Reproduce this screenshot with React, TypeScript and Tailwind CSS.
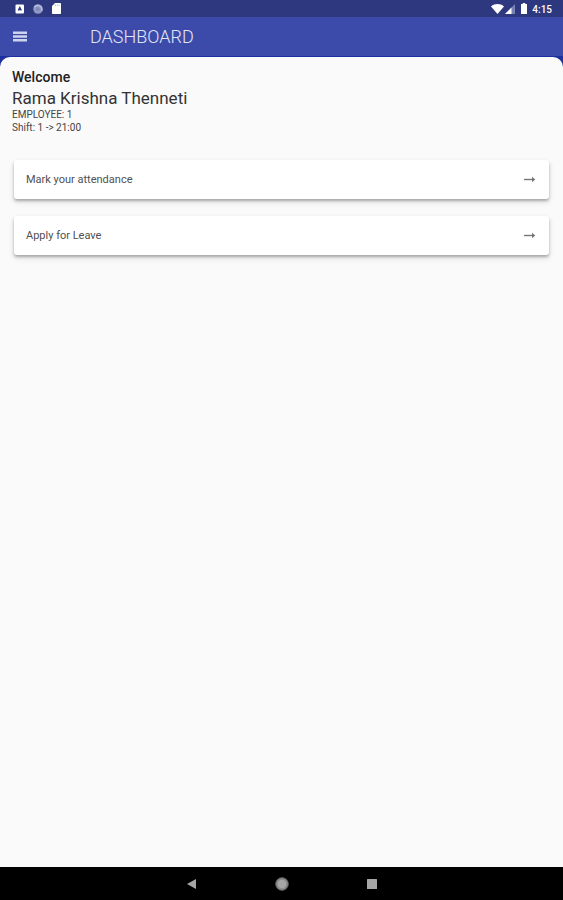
import type { ReactNode } from "react";

const employee = {
    name: "Rama Krishna Thenneti",
    id: 1,
    shift: "1 -> 21:00",
};

const actions = ["Mark your attendance", "Apply for Leave"];

function StatusBar() {
    return (
        <div className="flex h-[17px] items-center justify-between bg-[#2d387f] pr-[11px] pl-[15px] text-white">
            <div className="flex items-center gap-[9px]">
                <svg width="9" height="10" viewBox="0 0 9 10" aria-hidden="true">
                    <rect x="0.5" y="0.5" width="8.5" height="9" rx="1" fill="#fff" />
                    <path d="M3.2 6.6 4.8 3.4 6.4 6.6M3.8 5.6h2" fill="none" stroke="#2d387f" strokeWidth="1.2" />
                </svg>
                <svg width="10" height="10" viewBox="0 0 10 10" aria-hidden="true">
                    <circle cx="5" cy="5" r="4.8" fill="#9098c4" />
                    <path d="M1.4 3.2A4.2 4.2 0 0 1 8.8 6.8" fill="none" stroke="#bcc2df" strokeWidth="1.2" />
                    <circle cx="4.8" cy="5.2" r="1.8" fill="#7c87ba" />
                </svg>
                <svg width="9" height="11" viewBox="0 0 9 11" aria-hidden="true">
                    <path d="M3 0h5.2a.8.8 0 0 1 .8.8v9.4a.8.8 0 0 1-.8.8H.8a.8.8 0 0 1-.8-.8V3z" fill="#fff" />
                    <path d="M3.5 1.5v1.6M5.3 1.5v1.6M7.1 1.5v1.6" stroke="#9aa2cc" strokeWidth="0.6" />
                </svg>
            </div>
            <div className="flex items-center">
                <svg width="13" height="10" viewBox="0 0 13 10" aria-hidden="true">
                    <path d="M0 2.4C3.8-.7 9.2-.7 13 2.4L6.5 10z" fill="#fff" />
                </svg>
                <svg className="ml-px" width="10" height="10" viewBox="0 0 10 10" aria-hidden="true">
                    <path d="M10 0v10H0z" fill="#7781b4" />
                    <path d="M6.5 3.5V10H0z" fill="#fff" />
                </svg>
                <svg className="ml-[6px]" width="6" height="11" viewBox="0 0 6 11" aria-hidden="true">
                    <path d="M1.7 0h2.6v1H6v9.4a.6.6 0 0 1-.6.6H.6a.6.6 0 0 1-.6-.6V1h1.7z" fill="#fff" />
                </svg>
                <span className="ml-[5px] pt-0.5 text-[10px] leading-3 font-medium">4:15</span>
            </div>
        </div>
    );
}

function AppBar() {
    return (
        <header className="flex h-[39px] items-center bg-[#3c4ba9] pl-[13px] text-[#e3e6f7]">
            <button type="button" aria-label="Open menu" className="w-[77px]">
                <svg width="14" height="11" viewBox="0 0 14 11" aria-hidden="true">
                    <path d="M0 1.7h14M0 5.5h14M0 9.3h14" stroke="#cfd4ee" strokeWidth="2.5" />
                </svg>
            </button>
            <h1 className="text-[18px] leading-6 font-light">DASHBOARD</h1>
        </header>
    );
}

function ActionCard({ label }: { label: string }) {
    return (
        <button
            type="button"
            className="flex h-[39px] w-full items-center justify-between rounded-[3px] bg-white px-3 text-[11px] text-[#505050] shadow-[0_2px_3px_rgba(0,0,0,0.28),0_3px_7px_rgba(0,0,0,0.1)]"
        >
            <span className="pt-0.5">{label}</span>
            <svg className="mr-px" width="12" height="7" viewBox="0 0 12 7" aria-hidden="true">
                <path d="M0 3.5h9" stroke="#777" strokeWidth="1.4" />
                <path d="M8 0.8 11.3 3.5 8 6.2z" fill="#777" />
            </svg>
        </button>
    );
}

function NavButton({ label, children }: { label: string; children: ReactNode }) {
    return (
        <button type="button" aria-label={label} className="flex w-[90px] items-center justify-center">
            {children}
        </button>
    );
}

export default function App() {
    return (
        <div className="flex min-h-screen flex-col bg-[#fafafa] font-['Roboto',sans-serif]">
            <StatusBar />
            <AppBar />
            <div className="flex flex-1 flex-col bg-[linear-gradient(#1e2fa0_16px,#fafafa_16px)]">
                <main className="mt-px flex-1 rounded-t-[10px] bg-[#fafafa] pt-[10px]">
                    <section className="px-3 text-[#222]">
                        <p className="text-[14px] leading-[21px] font-medium">Welcome</p>
                        <h2 className="text-[17px] leading-5 text-[#333]">{employee.name}</h2>
                        <p className="text-[10px] leading-[13px] text-[#444]">EMPLOYEE: {employee.id}</p>
                        <p className="text-[10px] leading-[13px] text-[#444]">Shift: {employee.shift}</p>
                    </section>
                    <div className="mt-[26px] flex flex-col gap-[17px] px-[14px]">
                        {actions.map((label) => (
                            <ActionCard key={label} label={label} />
                        ))}
                    </div>
                </main>
            </div>
            <nav className="flex h-[33px] justify-center bg-black">
                <NavButton label="Back">
                    <svg width="9" height="10" viewBox="0 0 9 10" aria-hidden="true">
                        <path d="M9 0v10L0 5z" fill="#a6a6a6" />
                    </svg>
                </NavButton>
                <NavButton label="Home">
                    <svg width="14" height="14" viewBox="0 0 14 14" aria-hidden="true">
                        <circle cx="7" cy="7" r="6.2" fill="#8c8c8c" stroke="#707070" />
                        <circle cx="7" cy="7" r="4.2" fill="#a6a6a6" />
                    </svg>
                </NavButton>
                <NavButton label="Recent apps">
                    <svg width="10" height="10" viewBox="0 0 10 10" aria-hidden="true">
                        <rect width="10" height="10" rx="0.5" fill="#a6a6a6" />
                    </svg>
                </NavButton>
            </nav>
        </div>
    );
}
